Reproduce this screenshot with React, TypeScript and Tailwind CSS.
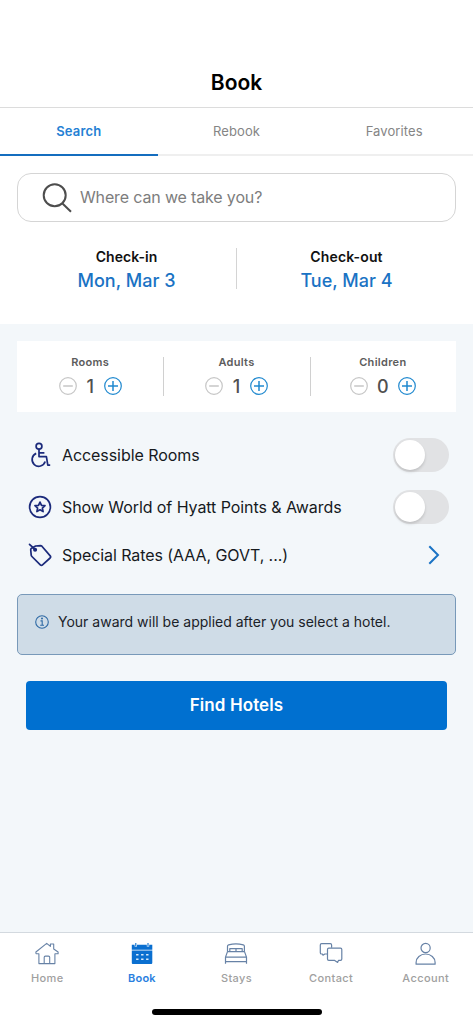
import type { ReactNode } from "react";

const TABS = ["Search", "Rebook", "Favorites"];

const GUESTS = [
  { label: "Rooms", count: 1 },
  { label: "Adults", count: 1 },
  { label: "Children", count: 0 },
];

function SearchIcon() {
  return (
    <svg width="30" height="30" viewBox="0 0 30 30" fill="none" stroke="#4d4d4d" strokeWidth="2">
      <circle cx="12.7" cy="12.3" r="11" />
      <path d="M20.2 20.2 29 28.8" />
    </svg>
  );
}

function WheelchairIcon() {
  return (
    <svg width="24" height="26" viewBox="0 0 24 26" fill="none" stroke="#1b2a7b" strokeWidth="1.7" strokeLinejoin="round">
      <circle cx="11" cy="4.2" r="2.9" />
      <path d="M11 7.1v7.5h7.4l1.4 8.5h2.4M11 10.9h5.4" />
      <path d="M8.2 11.4a6.7 6.7 0 1 0 9 8.2" />
    </svg>
  );
}

function AwardIcon() {
  return (
    <svg width="24" height="24" viewBox="0 0 24 24" fill="none" stroke="#1b2a7b" strokeWidth="1.7" strokeLinejoin="round">
      <circle cx="12" cy="12" r="10.4" />
      <path d="m12 7.1 1.5 3.2 3.5.4-2.6 2.4.7 3.5-3.1-1.8-3.1 1.8.7-3.5L7 10.7l3.5-.4z" />
    </svg>
  );
}

function TagIcon() {
  return (
    <svg width="24" height="24" viewBox="0 0 24 24" fill="none" stroke="#1b2a7b" strokeWidth="1.7" strokeLinejoin="round" strokeLinecap="round">
      <path d="M3.2 5.4 2.7 6.5l.5 5.6c.1.6.3 1 .7 1.4l8.4 8.4c.7.7 1.5.7 2.2 0l7.6-6.9c.7-.7.7-1.4.1-2.1L13.9 3.2c-.4-.4-.8-.6-1.4-.6L7.6 3z" />
      <path d="M1.5 1.3 6.6 6" />
      <circle cx="7.1" cy="6.7" r="1.2" fill="#1b2a7b" />
    </svg>
  );
}

function InfoIcon() {
  return (
    <svg width="14" height="14" viewBox="0 0 14 14" fill="none" stroke="#2f6aa5" strokeWidth="1.1">
      <circle cx="7" cy="7" r="6.3" />
      <path d="M5.5 5.9h1.7v4.2M5.2 10.2h3.8" />
      <circle cx="7" cy="3.6" r=".45" fill="#2f6aa5" />
    </svg>
  );
}

function HomeIcon() {
  return (
    <svg width="24" height="24" viewBox="0 0 24 24" fill="none" stroke="#6782a6" strokeWidth="1.1" strokeLinejoin="round">
      <path d="M3.9 11.6v10h16v-10M.9 11.7.9 10 11.7 1.4l3.7 3V2h3.3v5l4.4 3v1.8h-3.2M.9 11.7h3" />
      <path d="M9.2 21.5v-6.2c0-.8.4-1.2 1.2-1.2h3.1c.8 0 1.2.4 1.2 1.2v6.2" />
    </svg>
  );
}

function CalendarIcon() {
  return (
    <svg width="24" height="24" viewBox="0 0 24 24" fill="#0a6fd0">
      <path d="M1.8 2.7h20.5v5H1.8zM1.8 8.5h20.5v12.2c0 .8-.5 1.3-1.3 1.3H3.1c-.8 0-1.3-.5-1.3-1.3z" />
      <path d="M5.8 1v3.6M18 1v3.6" stroke="#fff" strokeWidth="2.4" />
      <path d="M5.8 1v3M18 1v3" stroke="#0a6fd0" strokeWidth="1.1" />
      <path d="M6.1 12.8h12.5M6.1 17.2h12.5" stroke="#d9ebfb" strokeWidth="1.6" strokeDasharray="2.4 2.6" />
    </svg>
  );
}

function BedIcon() {
  return (
    <svg width="24" height="24" viewBox="0 0 24 24" fill="none" stroke="#6782a6" strokeWidth="1.2" strokeLinejoin="round">
      <path d="M3.5 9.6V4.2c0-.7.4-1.2 1.1-1.4 4.9-1.1 9.8-1.1 14.7 0 .7.2 1.1.7 1.1 1.4v5.4" />
      <path d="M5.8 9.6V6.7h12.4v2.9M12 6.7v2.9M3.5 9.6h17l2 5.5H1.5zM1.5 15.1v6.7M22.5 15.1v6.7M1.5 19.7h21" />
    </svg>
  );
}

function ChatIcon() {
  return (
    <svg width="24" height="24" viewBox="0 0 24 24" fill="none" stroke="#6782a6" strokeWidth="1.2" strokeLinejoin="round">
      <path d="M8.3 12H5.8L4 13.2 3.4 12H2.6c-.8 0-1.3-.5-1.3-1.3V3c0-.8.5-1.3 1.3-1.3h8.7c.8 0 1.3.5 1.3 1.3v2.8" />
      <path d="M9.8 6.2h11.7c.8 0 1.3.5 1.3 1.3v9.6c0 .8-.5 1.3-1.3 1.3h-2l-.8 2-3-2H9.8c-.8 0-1.3-.5-1.3-1.3V7.5c0-.8.5-1.3 1.3-1.3z" />
    </svg>
  );
}

function PersonIcon() {
  return (
    <svg width="24" height="24" viewBox="0 0 24 24" fill="none" stroke="#6782a6" strokeWidth="1.2" strokeLinejoin="round">
      <circle cx="11.6" cy="6" r="4.6" />
      <path d="M2.1 22.2v-1.8a9.5 8.4 0 0 1 19 0v1.8z" />
    </svg>
  );
}

function StepIcon({ plus }: { plus?: boolean }) {
  return (
    <svg
      width="18"
      height="18"
      viewBox="0 0 18 18"
      fill="none"
      stroke={plus ? "#2089cf" : "#c6c6c6"}
      strokeWidth="1.2"
    >
      <circle cx="9" cy="9" r="8.3" />
      <path d={plus ? "M4 9h10M9 4v10" : "M4.2 9h9.6"} strokeWidth="1.5" />
    </svg>
  );
}

function Toggle() {
  return (
    <button className="flex h-[34px] w-[56px] items-center rounded-full bg-[#e1e2e4] px-[2px]">
      <span className="size-[30px] rounded-full bg-white shadow-[0_2px_3px_rgba(0,0,0,0.15)]" />
    </button>
  );
}

function OptionRow({ icon, label, children }: { icon: ReactNode; label: string; children: ReactNode }) {
  return (
    <>
      <span className="flex w-6 justify-center">{icon}</span>
      <span className="ml-[10px] flex-1 text-[16px] tracking-[-0.07px] text-[#161a1e]">{label}</span>
      {children}
    </>
  );
}

const NAV = [
  { label: "Home", icon: <HomeIcon /> },
  { label: "Book", icon: <CalendarIcon /> },
  { label: "Stays", icon: <BedIcon /> },
  { label: "Contact", icon: <ChatIcon /> },
  { label: "Account", icon: <PersonIcon /> },
];

export default function App() {
  return (
    <div className="flex h-[1024px] w-[473px] flex-col overflow-hidden bg-[#f3f7fa] font-['Inter',sans-serif]">
      <header className="flex h-[108px] shrink-0 items-end justify-center border-b border-[#dcdcdc] bg-white pb-[9px]">
        <h1 className="text-[21px] leading-[30px] font-semibold text-black">Book</h1>
      </header>

      <nav className="grid h-12 shrink-0 grid-cols-3 bg-white">
        {TABS.map((tab, i) => (
          <button
            key={tab}
            className={
              i === 0
                ? "border-b-2 border-[#146dbf] pt-[2px] text-[13px] font-semibold tracking-[0.2px] text-[#2480d4]"
                : "border-b-2 border-[#efefef] pt-[2px] text-[13px] tracking-[0.1px] text-[#858585]"
            }
          >
            {tab}
          </button>
        ))}
      </nav>

      <section className="h-[168px] shrink-0 bg-white px-[17px] pt-[17px]">
        <div className="flex h-[49px] w-[439px] items-center rounded-[14px] border border-[#d5d5d5] pl-6">
          <SearchIcon />
          <span className="ml-2 pb-[2px] text-[16px] tracking-[-0.15px] text-[#7d7d7d]">Where can we take you?</span>
        </div>
        <div className="mt-[26px] flex h-[42px]">
          <div className="flex-1 text-center">
            <p className="text-[14px] leading-[18px] font-semibold tracking-[0.05px] text-[#111]">Check-in</p>
            <p className="mt-[3px] text-[18px] leading-[24px] font-medium text-[#1a73c4]">Mon, Mar 3</p>
          </div>
          <div className="h-[41px] w-px bg-[#d4d4d4]" />
          <div className="flex-1 text-center">
            <p className="text-[14px] leading-[18px] font-semibold tracking-[0.15px] text-[#111]">Check-out</p>
            <p className="mt-[3px] text-[18px] leading-[24px] font-medium text-[#1a73c4]">Tue, Mar 4</p>
          </div>
        </div>
      </section>

      <main className="flex-1 pt-[17px] pr-[17px] pl-[17px]">
        <div className="grid h-[71px] grid-cols-3 bg-white">
          {GUESTS.map((g, i) => (
            <div key={g.label} className="relative pt-[14px] text-center">
              {i > 0 && <span className="absolute top-4 left-0 h-[39px] w-px bg-[#d0d0d0]" />}
              <p className="text-[11px] leading-[14px] font-semibold tracking-[0.3px] text-[#5c5c5c]">{g.label}</p>
              <div className="mt-[6px] flex h-[22px] items-center justify-center">
                <StepIcon />
                <span
                  className={
                    g.count === 0
                      ? "w-[30px] text-[18px] font-medium text-[#505050]"
                      : "w-[27px] text-[18px] font-medium text-[#505050]"
                  }
                >
                  {g.count}
                </span>
                <StepIcon plus />
              </div>
            </div>
          ))}
        </div>

        <div className="pt-[17px] pr-[7px] pl-[11px]">
          <div className="flex h-[52px] items-center">
            <OptionRow icon={<WheelchairIcon />} label="Accessible Rooms">
              <Toggle />
            </OptionRow>
          </div>
          <div className="flex h-[52px] items-center">
            <OptionRow icon={<AwardIcon />} label="Show World of Hyatt Points & Awards">
              <Toggle />
            </OptionRow>
          </div>
          <div className="flex h-11 items-center">
            <OptionRow icon={<TagIcon />} label="Special Rates (AAA, GOVT, ...)">
              <svg width="12" height="20" viewBox="0 0 12 20" fill="none" stroke="#1a73c4" strokeWidth="2" className="mr-[9px]">
                <path d="m1.3 1.2 8.7 8.8-8.7 8.8" />
              </svg>
            </OptionRow>
          </div>
        </div>

        <div className="mt-[17px] flex h-[61px] items-start rounded-[5px] border border-[#7899b9] bg-[#cfdce7] pt-[18px] pl-[17px]">
          <span className="mt-[2px]">
            <InfoIcon />
          </span>
          <span className="ml-[9px] text-[14px] leading-[18px] text-[#1b2229]">
            Your award will be applied after you select a hotel.
          </span>
        </div>

        <button className="mx-[9px] mt-[26px] flex h-[49px] w-[421px] items-center justify-center rounded-[4px] bg-[#0070d0] text-[17px] font-semibold tracking-[0.1px] text-white">
          Find Hotels
        </button>
      </main>

      <footer className="flex h-[92px] shrink-0 flex-col items-center border-t border-[#d3d9df] bg-white">
        <div className="grid w-full grid-cols-5 pt-[9px]">
          {NAV.map((item) => (
            <div key={item.label} className="flex flex-col items-center">
              {item.icon}
              <span
                className={
                  item.label === "Book"
                    ? "mt-[5px] text-[11px] leading-[14px] font-semibold tracking-[0.2px] text-[#2b7fe0]"
                    : "mt-[5px] text-[11px] leading-[14px] font-medium tracking-[0.4px] text-[#a0a0a0]"
                }
              >
                {item.label}
              </span>
            </div>
          ))}
        </div>
        <div className="mt-[24px] h-[6px] w-[170px] rounded-full bg-black" />
      </footer>
    </div>
  );
}
